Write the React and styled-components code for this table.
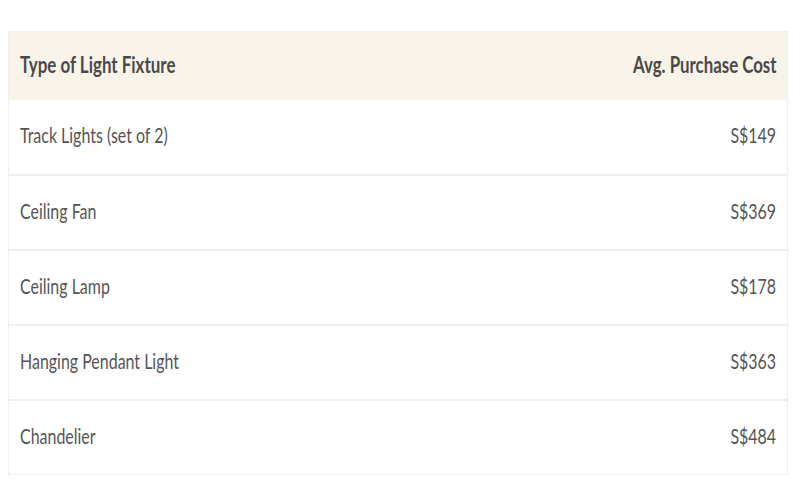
import React from "react";
import styled, { createGlobalStyle } from "styled-components";

const Global = createGlobalStyle`
  html, body { margin: 0; padding: 0; background: #ffffff; }
  body { font-family: Lato, "Open Sans", sans-serif; }
`;

const Page = styled.div`
  padding: 31px 12px 0 8px;
  box-sizing: border-box;
  width: 800px;
`;

const Table = styled.table`
  width: 780px;
  border-collapse: collapse;
  border: 1px solid #f0efec;
`;

const HeadRow = styled.tr`
  background: #f8f4e9;
  height: 68px;
`;

const HeadCell = styled.th`
  padding: 0 11px 2px;
  font-size: 22px;
  font-weight: 700;
  color: #4a4a4a;
  text-align: ${(p) => (p.$right ? "right" : "left")};
  vertical-align: middle;
  white-space: nowrap;
`;

const Row = styled.tr`
  height: 75px;
  border-top: ${(p) => (p.$first ? "none" : "2px solid #efefef")};
`;

const Cell = styled.td`
  padding: 0 11px 4px;
  font-size: 21px;
  font-weight: 400;
  color: #555555;
  text-align: ${(p) => (p.$right ? "right" : "left")};
  vertical-align: middle;
  white-space: nowrap;
`;

const Narrow = styled.span`
  display: inline-block;
  transform: scaleX(${(p) => p.$k});
  transform-origin: ${(p) => (p.$right ? "right" : "left")} center;
`;

const rows = [
  ["Track Lights (set of 2)", "S$149"],
  ["Ceiling Fan", "S$369"],
  ["Ceiling Lamp", "S$178"],
  ["Hanging Pendant Light", "S$363"],
  ["Chandelier", "S$484"],
];

export default function App() {
  return (
    <Page>
      <Global />
      <Table>
        <thead>
          <HeadRow>
            <HeadCell>
              <Narrow $k={0.77}>Type of Light Fixture</Narrow>
            </HeadCell>
            <HeadCell $right>
              <Narrow $k={0.765} $right>Avg. Purchase Cost</Narrow>
            </HeadCell>
          </HeadRow>
        </thead>
        <tbody>
          {rows.map(([name, cost], i) => (
            <Row key={name} $first={i === 0}>
              <Cell>
                <Narrow $k={0.76}>{name}</Narrow>
              </Cell>
              <Cell $right>
                <Narrow $k={0.76} $right>{cost}</Narrow>
              </Cell>
            </Row>
          ))}
        </tbody>
      </Table>
    </Page>
  );
}
